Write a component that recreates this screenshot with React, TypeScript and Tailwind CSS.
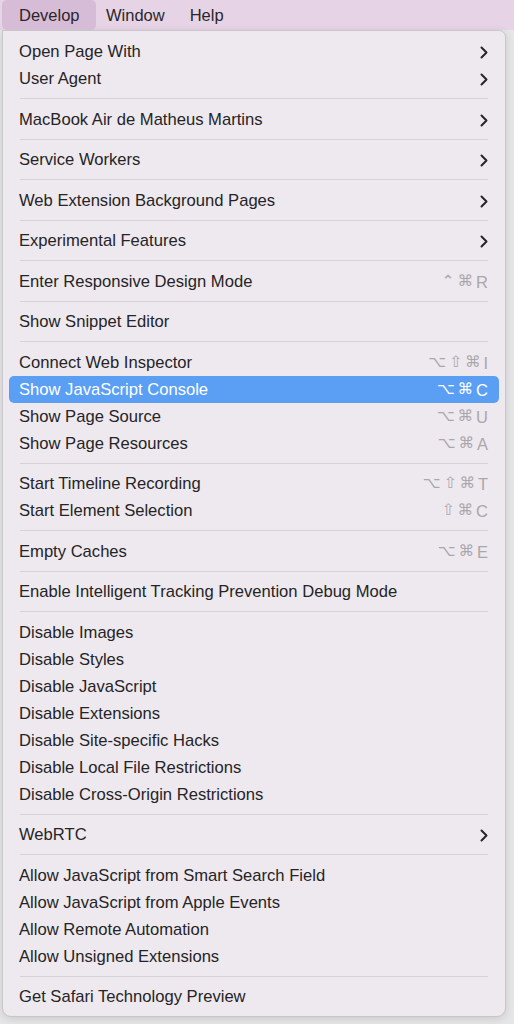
import React from "react";

type Item =
  | { kind: "sep" }
  | { kind: "item"; label: string; sub?: boolean; keys?: string; active?: boolean };

const item = (label: string, extra: Partial<Omit<Extract<Item, { kind: "item" }>, "kind" | "label">> = {}): Item => ({
  kind: "item",
  label,
  ...extra,
});
const sep: Item = { kind: "sep" };

const items: Item[] = [
  item("Open Page With", { sub: true }),
  item("User Agent", { sub: true }),
  sep,
  item("MacBook Air de Matheus Martins", { sub: true }),
  sep,
  item("Service Workers", { sub: true }),
  sep,
  item("Web Extension Background Pages", { sub: true }),
  sep,
  item("Experimental Features", { sub: true }),
  sep,
  item("Enter Responsive Design Mode", { keys: "⌃⌘R" }),
  sep,
  item("Show Snippet Editor"),
  sep,
  item("Connect Web Inspector", { keys: "⌥⇧⌘I" }),
  item("Show JavaScript Console", { keys: "⌥⌘C", active: true }),
  item("Show Page Source", { keys: "⌥⌘U" }),
  item("Show Page Resources", { keys: "⌥⌘A" }),
  sep,
  item("Start Timeline Recording", { keys: "⌥⇧⌘T" }),
  item("Start Element Selection", { keys: "⇧⌘C" }),
  sep,
  item("Empty Caches", { keys: "⌥⌘E" }),
  sep,
  item("Enable Intelligent Tracking Prevention Debug Mode"),
  sep,
  item("Disable Images"),
  item("Disable Styles"),
  item("Disable JavaScript"),
  item("Disable Extensions"),
  item("Disable Site-specific Hacks"),
  item("Disable Local File Restrictions"),
  item("Disable Cross-Origin Restrictions"),
  sep,
  item("WebRTC", { sub: true }),
  sep,
  item("Allow JavaScript from Smart Search Field"),
  item("Allow JavaScript from Apple Events"),
  item("Allow Remote Automation"),
  item("Allow Unsigned Extensions"),
  sep,
  item("Get Safari Technology Preview"),
];

function Chevron() {
  return (
    <svg width="8" height="13" viewBox="0 0 8 13" fill="none">
      <path d="M1.5 1.5 L6.5 6.5 L1.5 11.5" stroke="#262626" strokeWidth="2" strokeLinecap="round" strokeLinejoin="round" />
    </svg>
  );
}

function Keys({ keys, active }: { keys: string; active?: boolean }) {
  return (
    <span
      className={
        "flex gap-[3px] text-[15.5px] font-['DejaVu_Sans',sans-serif] " +
        (active ? "text-white" : "text-[#aaa7ab]")
      }
    >
      {keys.split("").map((k, i) => (
        <span key={i} className={/[A-Z]/.test(k) ? "font-['Liberation_Sans',sans-serif] text-[16.5px]" : ""}>
          {k}
        </span>
      ))}
    </span>
  );
}

function MenuRow({ row }: { row: Item }) {
  if (row.kind === "sep") {
    return (
      <div className="h-[13.5px] flex items-center px-[17px]">
        <div className="h-px w-full bg-[#d6d2d7]" />
      </div>
    );
  }
  return (
    <div
      className={
        "h-[27px] mx-[6px] pt-[2px] pl-[10px] pr-[11px] flex items-center justify-between rounded-[5px] " +
        (row.active ? "bg-[#5b9ff5] text-white" : "text-[#252426]")
      }
    >
      <span>{row.label}</span>
      {row.sub && <Chevron />}
      {row.keys && <Keys keys={row.keys} active={row.active} />}
    </div>
  );
}

export default function App() {
  return (
    <div className="w-[514px] h-[1024px] overflow-hidden bg-[#e6e5e7] font-['Liberation_Sans',Arial,sans-serif] text-[16.6px]">
      <div className="h-[30px] bg-[#e7d3e6] flex items-stretch text-[16.5px] text-[#2a2629]">
        <div className="ml-[2px] w-[94px] bg-[#d7bcd7] rounded-[5px] flex items-center pl-[17px]">Develop</div>
        <div className="flex items-center pl-[10px]">Window</div>
        <div className="flex items-center pl-[25px]">Help</div>
      </div>
      <div className="ml-[2px] w-[504px] rounded-b-[9px] rounded-tr-[7px] bg-[#eee9ef] border border-[#c9c6ca] shadow-[0_2px_8px_rgba(0,0,0,0.12)] pt-[7px] pb-[6px]">
        {items.map((row, i) => (
          <MenuRow key={i} row={row} />
        ))}
      </div>
    </div>
  );
}
